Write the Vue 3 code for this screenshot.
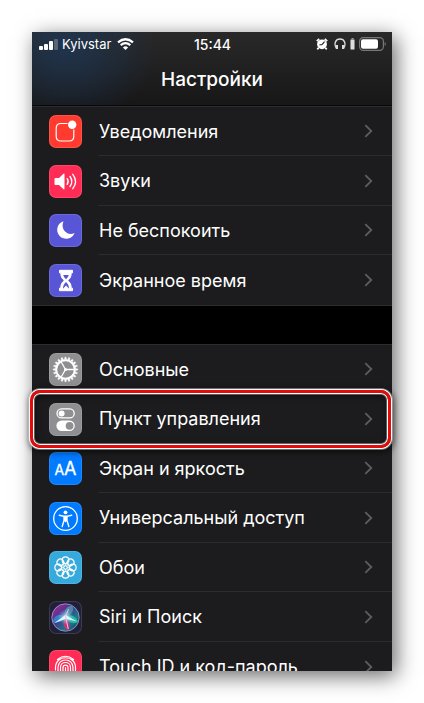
<script setup>
// Groupes de réglages affichés dans la liste
const groups = [
  [
    { id: "notifications", label: "Уведомления" },
    { id: "sounds", label: "Звуки" },
    { id: "dnd", label: "Не беспокоить" },
    { id: "screentime", label: "Экранное время" },
  ],
  [
    { id: "general", label: "Основные" },
    { id: "control", label: "Пункт управления", highlighted: true },
    { id: "display", label: "Экран и яркость" },
    { id: "access", label: "Универсальный доступ" },
    { id: "wallpaper", label: "Обои" },
    { id: "siri", label: "Siri и Поиск" },
    { id: "touchid", label: "Touch ID и код-пароль" },
  ],
];

const petals = [0, 45, 90, 135, 180, 225, 270, 315];
const teeth = Array.from({ length: 20 }, (_, i) => i * 18);
</script>

<template>
  <main class="page">
    <div class="screen">
      <header class="header">
        <div class="status">
          <div class="status-left">
            <svg width="19" height="11" viewBox="0 0 19 11" fill="#fff">
              <rect x="0" y="7" width="4" height="4" rx="1" />
              <rect x="5" y="5" width="4" height="6" rx="1" />
              <rect x="10" y="2" width="4" height="9" rx="1" />
              <rect x="15" y="0" width="4" height="11" rx="1" opacity=".25" />
            </svg>
            <span>Kyivstar</span>
            <svg class="wifi" width="17" height="12" viewBox="0 0 17 12" fill="none" stroke="#fff" stroke-width="2.2">
              <path d="M1 4.4Q8.500-1.900 16 4.400" />
              <path d="M3.700 7.200Q8.500 3.100 13.300 7.200" />
              <path d="M8.500 12L5.900 9.400Q8.500 7.200 11.100 9.400Z" fill="#fff" stroke="none" />
            </svg>
          </div>
          <time class="clock">15:44</time>
          <div class="status-right">
            <svg width="12" height="12" viewBox="0 0 12 12">
              <circle cx="6" cy="6.300" r="4.900" fill="#fff" />
              <path d="M.8 3.200L3.200.9M8.800.9l2.400 2.300M2.600 9.800L1.300 11.400M9.400 9.800l1.300 1.600" stroke="#fff" stroke-width="1.700" />
              <path d="M6 6.700H3.400M6 6.700L8.500 3.700" stroke="#222" stroke-width="1.100" fill="none" />
            </svg>
            <svg class="headphones" width="12" height="12" viewBox="0 0 12 12" fill="none" stroke="#ddd">
              <path d="M2.300 10.500C-.5 5.500 1.700 1 6 1s6.500 4.500 3.700 9.500" stroke-width="1.300" />
              <path d="M3 7v4M9 7v4" stroke-width="2" />
            </svg>
            <svg width="5" height="12" viewBox="0 0 5 12">
              <rect x=".5" y="1.500" width="4" height="10" rx="1" fill="#ddd" stroke="#888" />
              <path d="M1.500.6h2" stroke="#aaa" />
            </svg>
            <svg class="battery" width="27" height="14" viewBox="0 0 27 14">
              <rect x=".6" y=".6" width="23.800" height="12.800" rx="3.600" fill="none" stroke="#777" stroke-width="1.200" />
              <rect x="2" y="2.300" width="17" height="9.400" rx="2" fill="#fff" />
              <path d="M25.600 5v4q1.200-.6 1.200-2t-1.200-2" fill="#777" />
            </svg>
          </div>
        </div>
        <h1>Настройки</h1>
      </header>

      <nav class="list">
        <ul v-for="(group, i) in groups" :key="i" class="group">
          <li v-for="item in group" :key="item.id">
            <a href="#" class="row" :class="{ highlighted: item.highlighted }">
              <span class="icon" :class="item.id">
                <svg viewBox="0 0 33 33" fill="none" stroke="#fff">
                  <g v-if="item.id === 'notifications'">
                    <path d="M18.500 8.500H12q-4.800 0-4.800 4.800v7.900Q7.200 26 12 26h8q4.800 0 4.800-4.800V14.500" stroke-width="1.200" />
                    <circle cx="23.200" cy="9.700" r="4.200" fill="#fff" stroke="none" />
                  </g>
                  <g v-else-if="item.id === 'sounds'">
                    <path d="M5.500 14q0-1 1-1H10l4.500-4.200q1-.6 1 .5v14.400q0 1.100-1 .5L10 20H6.500q-1 0-1-1z" fill="#fff" stroke="none" />
                    <path d="M18.200 13.700q1.900 2.800 0 5.600M21 11.500q3.600 5 0 10M23.800 9.300q5.400 7.200 0 14.400" stroke-width="1.400" stroke-linecap="round" />
                  </g>
                  <path v-else-if="item.id === 'dnd'" d="M14.500 7.200A9 9 0 1 0 25.600 19C18 22.500 11 15 14.500 7.200Z" fill="#fff" stroke="none" />
                  <g v-else-if="item.id === 'screentime'">
                    <path d="M10.500 6.300h13v2.500h-1.300c0 4.300-1.300 5.800-3.500 7.700 2.200 1.900 3.500 3.400 3.500 7.700h1.300v2.500h-13v-2.500h1.300c0-4.300 1.300-5.800 3.500-7.700-2.200-1.900-3.500-3.400-3.500-7.700h-1.300z" fill="#fff" stroke-linejoin="round" />
                    <path d="M14.200 11h5.600q-.5 2.500-2.800 4.200-2.300-1.700-2.800-4.200zM17 18v3.500l-3 3.200c0-3 .9-4.500 3-6.700 2.100 2.200 3 3.700 3 6.700l-3-3.200" fill="#5856d6" stroke="none" />
                  </g>
                  <g v-else-if="item.id === 'general'">
                    <path v-for="a in teeth" :key="a" d="M15.500 6.500L15.900 4.200h1.200l.4 2.300z" :transform="`rotate(${a} 16.500 16.500)`" fill="#fff" stroke-width=".4" />
                    <circle cx="16.500" cy="16.500" r="9.300" stroke-width="2" />
                    <path d="M16.500 16.500h8.500M16.500 16.500L12.200 9M16.500 16.500L12.200 24" stroke-width="1.300" />
                    <circle cx="16.500" cy="16.500" r="1.500" fill="#fff" stroke="none" />
                  </g>
                  <g v-else-if="item.id === 'control'">
                    <rect x="8" y="5.900" width="17.200" height="9" rx="4.500" stroke-width="1.300" />
                    <circle cx="12.600" cy="10.400" r="3" fill="#fff" stroke="none" />
                    <rect x="7.400" y="17.600" width="18.400" height="10.400" rx="5.200" fill="#fff" stroke="none" />
                    <circle cx="20.600" cy="22.800" r="3.900" fill="#8e8e93" stroke="none" />
                  </g>
                  <g v-else-if="item.id === 'display'" class="letters" fill="#fff" stroke="#fff" stroke-width=".3">
                    <text x="5.500" y="23" font-size="14">A</text>
                    <text x="15" y="23" font-size="18">A</text>
                  </g>
                  <g v-else-if="item.id === 'access'">
                    <circle cx="16.500" cy="16.500" r="11.800" stroke-width="1.300" />
                    <circle cx="16.500" cy="10.300" r="1.900" fill="#fff" stroke="none" />
                    <path d="M10.300 13.300l4.700 1v4.200l-1.800 6M22.700 13.300l-4.700 1v4.200l1.800 6M15 14.300h3M15 18.500h3" stroke-width="1.400" stroke-linecap="round" />
                    <path d="M15 14h3v4.500l-1.500 2-1.500-2z" fill="#fff" stroke="none" />
                  </g>
                  <g v-else-if="item.id === 'wallpaper'">
                    <circle v-for="a in petals" :key="a" cx="16.500" cy="9.200" r="3.300" :transform="`rotate(${a} 16.500 16.500)`" stroke-width="1.200" />
                    <circle v-for="a in petals" :key="'c' + a" cx="16.500" cy="13.400" r="1.700" :transform="`rotate(${a + 22.5} 16.500 16.500)`" stroke-width=".7" />
                  </g>
                  <g v-else-if="item.id === 'siri'">
                    <defs>
                      <linearGradient id="orb" x1="0" y1="0" x2="1" y2="1">
                        <stop offset="0" stop-color="#b02b9c" />
                        <stop offset=".4" stop-color="#4b3389" />
                        <stop offset=".7" stop-color="#147c8c" />
                        <stop offset="1" stop-color="#27275c" />
                      </linearGradient>
                      <radialGradient id="glow">
                        <stop offset="0" stop-color="#fff" />
                        <stop offset=".3" stop-color="#c7f3ff" stop-opacity=".6" />
                        <stop offset="1" stop-color="#63c8ef" stop-opacity="0" />
                      </radialGradient>
                    </defs>
                    <circle cx="16.500" cy="16.500" r="13.700" fill="url(#orb)" stroke="#aaa0c8" stroke-width=".8" />
                    <path d="M16.500 16C9 11 4.500 16 3.800 21c5 2 10-1 12.700-5z" fill="#2895dc" stroke="none" opacity=".8" />
                    <path d="M16.500 16C14 10 17 5 23 4.800c3 4 0 9-6.500 11.200z" fill="#4a88a8" stroke="none" />
                    <path d="M16.500 16c4 3 5 8 3 13.500-6-2-6-8-3-13.500z" fill="#c13579" stroke="none" />
                    <path d="M16.500 16c5-3 11-1 12.500 5-5 3-10 0-12.500-5z" fill="#28b6a1" stroke="none" />
                    <circle cx="16.500" cy="16" r="8" fill="url(#glow)" stroke="none" />
                    <path d="M5 22.200L16.500 14l-.3 4zM28 20.500L16.500 14l.8 4z" fill="#dffaff" stroke="none" />
                    <path d="M16.500 16l2.800 12M16.500 16l3-8" stroke="#f5bde0" stroke-width="1" />
                  </g>
                  <g v-else-if="item.id === 'touchid'" stroke-width="1.200" stroke-linecap="round">
                    <path d="M8.500 9.500q8-6.500 16 0M6.500 20v-2.500c0-13 20-13 20 0v4" />
                    <path d="M9 23v-5.500c0-10 15-10 15 0V24M11.500 25v-7.500c0-6.700 10-6.700 10 0V26M14 27v-9.500c0-3.300 5-3.300 5 0V27M16.500 17.500V28" />
                  </g>
                </svg>
              </span>
              <span class="content">
                <span class="label">{{ item.label }}</span>
                <svg class="chevron" width="9" height="14" viewBox="0 0 9 14">
                  <path d="M1.300 1.200L7.300 7l-6 5.800" fill="none" stroke="#5d5d61" stroke-width="1.800" />
                </svg>
              </span>
            </a>
          </li>
        </ul>
      </nav>
    </div>
  </main>
</template>

<style>
body {
  background: #fff;
}
</style>

<style scoped>
.page {
  box-sizing: border-box;
  height: 100vh;
  padding: 32px;
  font-family: Inter, "Liberation Sans", sans-serif;
  color: #fff;
}

.screen {
  display: flex;
  flex-direction: column;
  height: 100%;
  background: #000;
  box-shadow: 4px 5px 20px rgba(0, 0, 0, 0.6);
}

.header {
  flex: none;
  box-sizing: border-box;
  height: 74px;
  background:
    radial-gradient(ellipse 90px 75px at 35px 15px, rgba(30, 56, 88, 0.8), transparent),
    linear-gradient(#292929, #171718);
  border-bottom: 1px solid #080808;
}

.status {
  display: grid;
  grid-template-columns: 1fr auto 1fr;
  align-items: center;
  height: 24px;
  padding: 0 6px 0 7px;
  font-size: 13px;
}

.status-left,
.status-right {
  display: flex;
  align-items: center;
  gap: 4px;
}

.status-right {
  justify-content: flex-end;
}

.wifi,
.headphones {
  margin-left: 2px;
}

.clock {
  font-size: 14px;
  font-weight: 500;
}

h1 {
  margin: 0;
  font-size: 19px;
  font-weight: 500;
  line-height: 48px;
  text-align: center;
}

/* Seul le bas de la liste est coupé, le cadre rouge déborde sur les côtés */
.list {
  flex: 1;
  min-height: 0;
  overflow-x: visible;
  overflow-y: clip;
}

.group {
  margin: 0 0 38px;
  padding: 0;
  list-style: none;
  background: #1c1c1e;
  border-top: 1px solid #2c2c2e;
  border-bottom: 1px solid #2c2c2e;
}

.row {
  position: relative;
  display: flex;
  align-items: center;
  gap: 16px;
  height: 49px;
  padding-left: 17px;
  color: inherit;
  text-decoration: none;
}

li:nth-child(even) .row {
  height: 50px;
}

.icon {
  flex: none;
  width: 33px;
  height: 33px;
  border-radius: 7px;
  box-shadow: inset 0 0 0 1px rgba(255, 255, 255, 0.12);
}

.icon svg {
  display: block;
}

.notifications {
  background: #ff3b30;
}

.sounds,
.touchid {
  background: #ff2d55;
}

.dnd,
.screentime {
  background: #5856d6;
}

.general,
.control {
  background: #8e8e93;
}

.display,
.access {
  background: #007aff;
}

.wallpaper {
  background: #36aadc;
}

.siri {
  background: #20203a;
}

.content {
  flex: 1;
  display: flex;
  align-items: center;
  justify-content: space-between;
  box-sizing: border-box;
  height: 100%;
  padding: 0 19px 0 1px;
  border-bottom: 1px solid #2c2c2e;
}

li:last-child .content {
  border-bottom: none;
}

.label {
  font-size: 18px;
  white-space: nowrap;
}

.highlighted::after {
  content: "";
  position: absolute;
  z-index: 1;
  inset: -4px 1px -4px -2px;
  border: 3px solid #e30b0b;
  border-radius: 10px;
  box-shadow:
    0 0 0 1px #fff,
    inset 0 0 0 1px #fff,
    0 0 0 2px rgba(200, 200, 200, 0.5),
    inset 0 0 0 2px rgba(200, 200, 200, 0.4),
    1px 2px 6px 2px rgba(0, 0, 0, 0.6),
    inset 1px 2px 6px 2px rgba(0, 0, 0, 0.5);
}
</style>
